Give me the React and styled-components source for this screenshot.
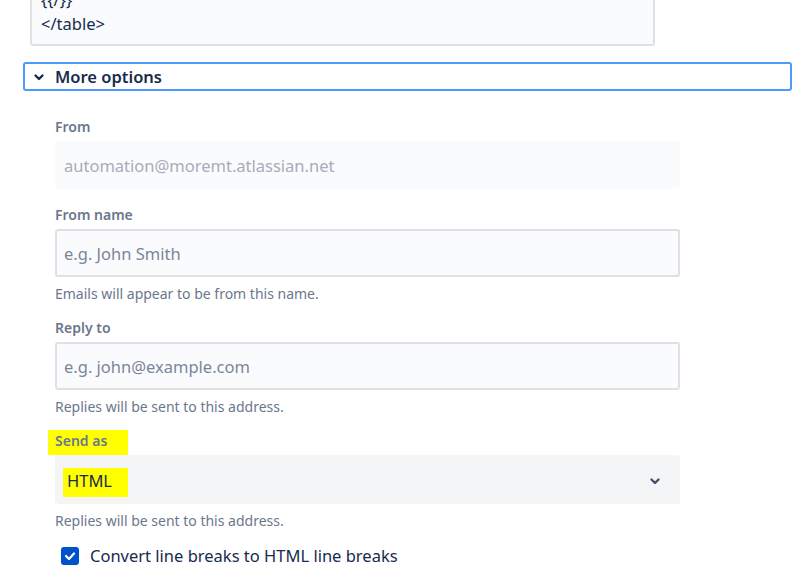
import React from "react"
import styled, { createGlobalStyle } from "styled-components"

const GlobalStyle = createGlobalStyle`
  html, body {
    margin: 0;
    padding: 0;
    background: #ffffff;
    overflow: hidden;
  }
  body {
    font-family: "Noto Sans", "Liberation Sans", sans-serif;
    color: #172b4d;
  }
`

const Page = styled.div`
  width: 807px;
  height: 569px;
  overflow: hidden;
`

const CodeBox = styled.div`
  margin: -22px 0 0 30px;
  width: 625px;
  box-sizing: border-box;
  padding: 8px 9px 8px;
  border: 2px solid #dfe1e6;
  border-radius: 3px;
  background: #fafbfc;
  font-size: 16.5px;
  line-height: 24px;
  color: #172b4d;
`

const MoreButton = styled.button`
  display: flex;
  align-items: center;
  gap: 10px;
  margin: 16px 0 0 23px;
  width: 769px;
  height: 29px;
  box-sizing: border-box;
  padding: 0 0 0 8px;
  border: 2px solid #4c9aff;
  border-radius: 3px;
  background: #ffffff;
  font-family: inherit;
  font-size: 16.5px;
  font-weight: 600;
  color: #172b4d;
  cursor: pointer;
`

const Form = styled.div`
  display: flex;
  flex-direction: column;
  margin: 26px 0 0 55px;
  width: 625px;
`

const Field = styled.div`
  display: flex;
  flex-direction: column;
  margin-bottom: ${(p) => (p.$last ? "0" : p.$noHelp ? "16px" : "14px")};
`

const Label = styled.label`
  font-size: 14px;
  font-weight: 600;
  line-height: 20px;
  color: #6b778c;
  margin-bottom: 4px;
`

const Highlight = styled.span`
  background: #ffff00;
  padding: ${(p) => p.$pad};
  margin-left: ${(p) => p.$shift};
`

const Input = styled.div`
  height: 48px;
  box-sizing: border-box;
  display: flex;
  align-items: center;
  padding: 0 7px;
  border: 2px solid ${(p) => (p.$disabled ? "#fafbfc" : "#dfe1e6")};
  border-radius: 3px;
  background: #fafbfc;
  font-size: 16.5px;
  color: ${(p) => (p.$disabled ? "#a5adba" : "#7a869a")};
`

const Select = styled.div`
  height: 49px;
  box-sizing: border-box;
  display: flex;
  align-items: center;
  justify-content: space-between;
  padding: 2px 19px 0 12px;
  border-radius: 3px;
  background: #f4f5f7;
  font-size: 16.5px;
  line-height: 20px;
  color: #172b4d;
`

const Help = styled.div`
  margin-top: 7px;
  font-size: 14px;
  line-height: 20px;
  color: #6b778c;
`

const CheckRow = styled.label`
  display: flex;
  align-items: center;
  gap: 11px;
  margin: 13px 0 0 6px;
  font-size: 16.5px;
  line-height: 24px;
  color: #172b4d;
`

const CheckBox = styled.span`
  display: flex;
  align-items: center;
  justify-content: center;
  width: 18px;
  height: 18px;
  border-radius: 3px;
  background: #0052cc;
`

const Chevron = ({ color = "#172b4d" }) => (
  <svg width="12" height="12" viewBox="0 0 12 12">
    <polyline
      points="2.5,4.5 6,8 9.5,4.5"
      fill="none"
      stroke={color}
      strokeWidth="2.4"
      strokeLinecap="round"
      strokeLinejoin="round"
    />
  </svg>
)

const App = () => (
  <Page>
    <GlobalStyle />
    <CodeBox>
      <div>{"{{/}}"}</div>
      <div>{"</table>"}</div>
    </CodeBox>

    <MoreButton>
      <Chevron />
      More options
    </MoreButton>

    <Form>
      <Field $noHelp>
        <Label>From</Label>
        <Input $disabled>automation@moremt.atlassian.net</Input>
      </Field>

      <Field>
        <Label>From name</Label>
        <Input>e.g. John Smith</Input>
        <Help>Emails will appear to be from this name.</Help>
      </Field>

      <Field>
        <Label>Reply to</Label>
        <Input>e.g. john@example.com</Input>
        <Help>Replies will be sent to this address.</Help>
      </Field>

      <Field $last>
        <Label>
          <Highlight $pad="1px 21px 5px 7px" $shift="-7px">
            Send as
          </Highlight>
        </Label>
        <Select>
          <span>
            <Highlight $pad="1px 16px 5px 4px" $shift="-4px">
              HTML
            </Highlight>
          </span>
          <Chevron color="#42526e" />
        </Select>
        <Help>Replies will be sent to this address.</Help>
      </Field>

      <CheckRow>
        <CheckBox>
          <svg width="12" height="10" viewBox="0 0 12 10">
            <polyline
              points="2,5 5,8 10,2.5"
              fill="none"
              stroke="#ffffff"
              strokeWidth="2.2"
              strokeLinecap="round"
              strokeLinejoin="round"
            />
          </svg>
        </CheckBox>
        Convert line breaks to HTML line breaks
      </CheckRow>
    </Form>
  </Page>
)

export default App
